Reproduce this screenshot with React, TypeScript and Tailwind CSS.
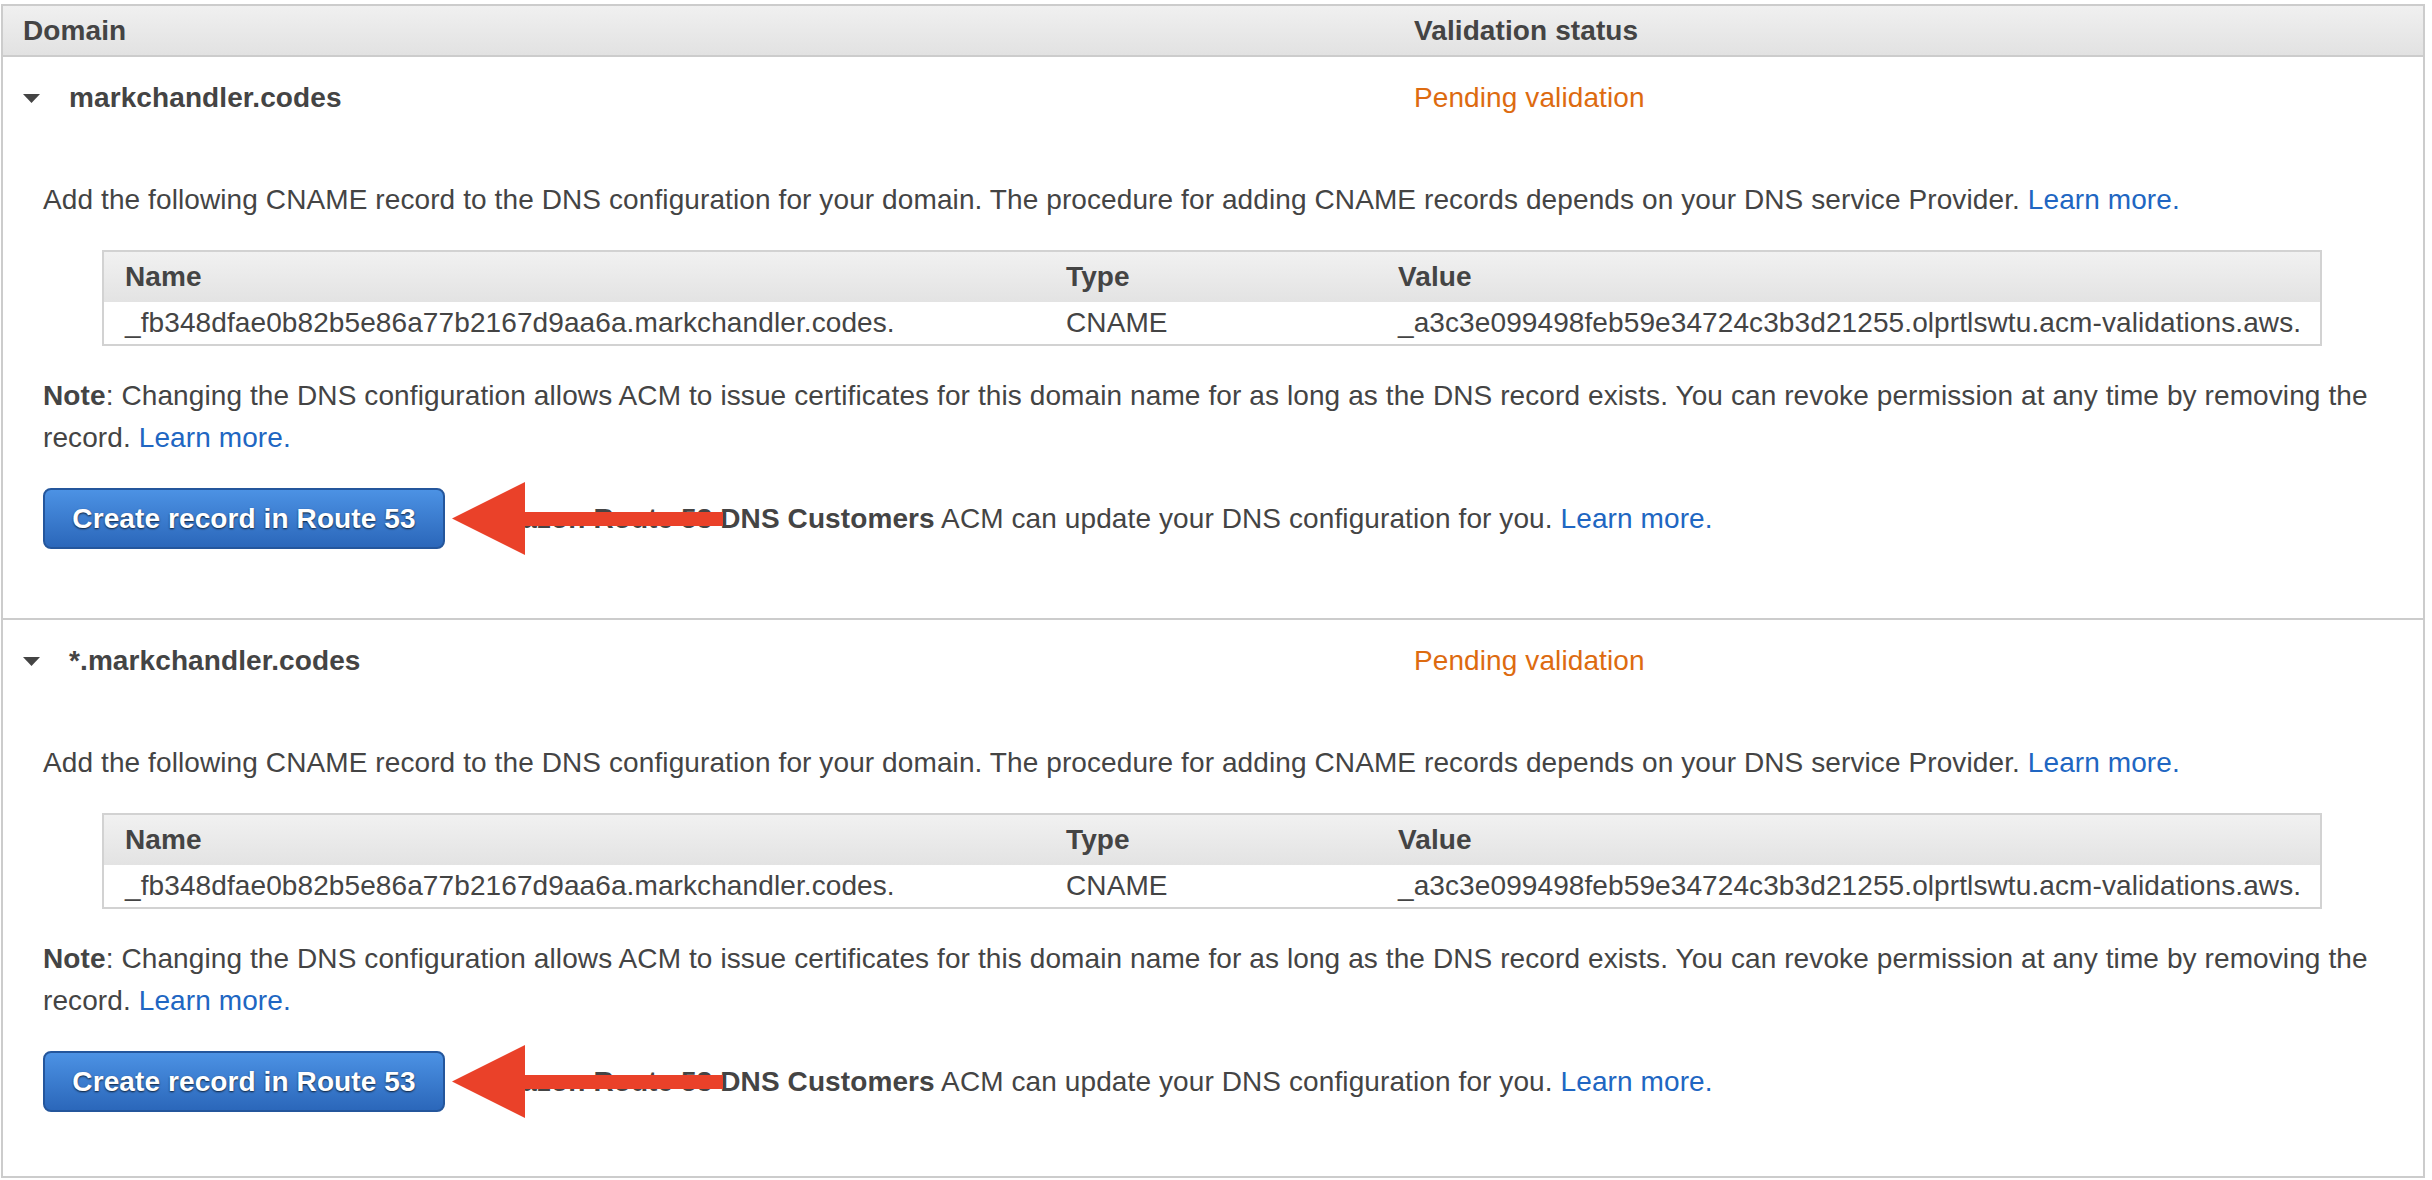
import React from "react";

const NAME_VALUE = "_fb348dfae0b82b5e86a77b2167d9aa6a.markchandler.codes.";
const CNAME_VALUE = "_a3c3e099498feb59e34724c3b3d21255.olprtlswtu.acm-validations.aws.";

function LearnMore() {
  return <a className="text-[#2066c2]">Learn more.</a>;
}

function Arrow() {
  return (
    <svg width="271" height="73" viewBox="0 0 271 73" className="absolute left-[409px] top-[-6px]">
      <polygon points="0,36.5 73,0 73,73" fill="#ea4129" />
      <rect x="72" y="30" width="199" height="14" fill="#ea4129" />
    </svg>
  );
}

function DomainRow({ domain, last }: { domain: string; last?: boolean }) {
  return (
    <div className={last ? "pt-[20px] pb-[64px]" : "pt-[20px] pb-[69px] border-b-2 border-[#cccccc]"}>
      {/* domain title + status */}
      <div className="grid grid-cols-[1391px_1fr] pl-[20px] h-[42px] items-center">
        <div className="flex items-center">
          <svg width="17" height="9" viewBox="0 0 17 9">
            <polygon points="0,0 17,0 8.5,9" fill="#444" />
          </svg>
          <span className="ml-[29px] font-bold">{domain}</span>
        </div>
        <span className="text-[#dd6b10]">Pending validation</span>
      </div>

      <div className="px-[40px]">
        <p className="mt-[60px]">
          Add the following CNAME record to the DNS configuration for your domain. The procedure for adding CNAME
          records depends on your DNS service Provider. <LearnMore />
        </p>

        {/* CNAME table */}
        <div className="ml-[59px] mt-[29px] w-[2220px] border-2 border-[#d2d2d2]">
          <div className="grid grid-cols-[941px_332px_1fr] h-[50px] items-center font-bold bg-linear-to-b from-[#f1f1f1] to-[#e3e3e3]">
            <span className="pl-[21px]">Name</span>
            <span className="pl-[21px]">Type</span>
            <span className="pl-[21px]">Value</span>
          </div>
          <div className="grid grid-cols-[941px_332px_1fr] h-[42px] items-center bg-white">
            <span className="pl-[21px]">{NAME_VALUE}</span>
            <span className="pl-[21px]">CNAME</span>
            <span className="pl-[21px]">{CNAME_VALUE}</span>
          </div>
        </div>

        <p className="mt-[29px] leading-[42px]">
          <b>Note</b>: Changing the DNS configuration allows ACM to issue certificates for this domain name for as long
          as the DNS record exists. You can revoke permission at any time by removing the record. <LearnMore />
        </p>

        <div className="relative mt-[29px] flex items-center">
          <button className="w-[402px] h-[61px] rounded-[8px] border-2 border-[#24569c] bg-linear-to-b from-[#4c92e4] to-[#2b67ba] text-white font-bold [text-shadow:0_1px_2px_rgba(0,0,0,0.75)]">
            Create record in Route 53
          </button>
          <span className="ml-[31px]">
            <b>Amazon Route 53 DNS Customers</b> ACM can update your DNS configuration for you. <LearnMore />
          </span>
          <Arrow />
        </div>
      </div>
    </div>
  );
}

export default function App() {
  return (
    <div className="min-h-screen bg-white font-['Liberation_Sans',Arial,sans-serif] text-[28px] leading-[42px] tracking-[0.1px] text-[#444444]">
      <div className="ml-[1px] mt-[4px] w-[2424px] border-2 border-[#cccccc]">
        <div className="grid grid-cols-[1391px_1fr] pl-[20px] h-[51px] items-center font-bold border-b-2 border-[#cccccc] bg-linear-to-b from-[#f0f0f0] to-[#e2e2e2]">
          <span>Domain</span>
          <span>Validation status</span>
        </div>
        <DomainRow domain="markchandler.codes" />
        <DomainRow domain="*.markchandler.codes" last />
      </div>
    </div>
  );
}
